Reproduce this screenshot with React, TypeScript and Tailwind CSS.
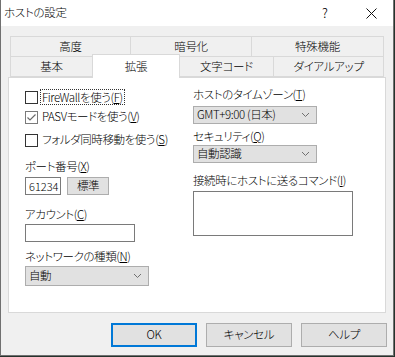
import React from 'react';

const font = "font-['Meiryo_UI','Noto_Sans_CJK_JP',sans-serif] [font-feature-settings:'palt'] font-light";

const Tab: React.FC<{ w: string; children: React.ReactNode; first?: boolean }> = ({ w, children, first }) => (
  <div className={`${w} ${first ? '' : '-ml-px'} h-full border border-[#d9d9d9] bg-[#f0f0f0] flex items-center justify-center text-[11.5px] tracking-[-0.3px] text-black whitespace-nowrap`}>
    {children}
  </div>
);

const Check: React.FC<{ checked?: boolean }> = ({ checked }) => (
  <div className={`w-[13px] h-[13px] border bg-white flex items-center justify-center shrink-0 ${checked ? 'border-[#7a7a7a]' : 'border-[#333333]'}`}>
    {checked && (
      <svg width="11" height="11" viewBox="0 0 11 11">
        <path d="M1.5 5.5 L4 8 L9.5 2.5" stroke="#6a6a6a" strokeWidth="1.2" fill="none" />
      </svg>
    )}
  </div>
);

const Chevron = () => (
  <svg width="9" height="6" viewBox="0 0 9 6" className="shrink-0">
    <path d="M1 1 L4.5 4.5 L8 1" stroke="#707070" strokeWidth="1" fill="none" />
  </svg>
);

const Select: React.FC<{ w: string; h: string; children: React.ReactNode }> = ({ w, h, children }) => (
  <div className={`${w} ${h} border border-[#adadad] bg-[#e1e1e1] flex items-center justify-between pl-[3px] pr-[6px] whitespace-nowrap`}>
    <span>{children}</span>
    <Chevron />
  </div>
);

const Btn: React.FC<{ children: React.ReactNode; primary?: boolean }> = ({ children, primary }) => (
  <div className={`w-[86px] h-[24px] bg-[#e1e1e1] flex items-center justify-center text-[11.5px] tracking-[-0.3px] ${primary ? 'border-2 border-[#0078d7]' : 'border border-[#adadad]'}`}>
    {children}
  </div>
);

const U: React.FC<{ children: React.ReactNode }> = ({ children }) => (
  <span className="underline underline-offset-1">{children}</span>
);

export default function App() {
  return (
    <div className={`w-[395px] h-[357px] bg-[#26332c] ${font} text-black`}>
      <div className="w-[394px] h-[356px] bg-[#f0f0f0] border-l border-r border-b border-[#707070] flex flex-col">
        {/* title bar */}
        <div className="h-[26px] bg-white flex items-center pl-[3px] shrink-0">
          <span className="text-[11.5px] tracking-[-0.3px] leading-none">ホストの設定</span>
          <span className="ml-auto text-[13px] w-[14px] text-center mr-[34px]">?</span>
          <svg width="11" height="11" viewBox="0 0 11 11" className="mr-[16px]">
            <path d="M0.5 0.5 L10.5 10.5 M10.5 0.5 L0.5 10.5" stroke="#111" strokeWidth="1" />
          </svg>
        </div>

        {/* tabs */}
        <div className="mt-[10px] ml-[9px] flex h-[21px]">
          <Tab w="w-[121px]" first>高度</Tab>
          <Tab w="w-[122px]">暗号化</Tab>
          <Tab w="w-[133px]">特殊機能</Tab>
        </div>
        <div className="-mt-px ml-[9px] flex h-[21px]">
          <Tab w="w-[83px]" first>基本</Tab>
          <div className="relative z-10 -ml-px -mt-[2px] h-[24px] w-[88px] bg-white border border-b-0 border-[#d9d9d9] flex items-center justify-center text-[11.5px] tracking-[-0.3px]">
            拡張
          </div>
          <Tab w="w-[95px]">文字コード</Tab>
          <Tab w="w-[111px]">ダイアルアップ</Tab>
        </div>

        {/* panel */}
        <div className="ml-[7px] w-[378px] h-[236px] bg-white border border-[#d9d9d9] flex text-[11.5px] tracking-[-0.4px] whitespace-nowrap">
          {/* left column */}
          <div className="w-[168px] shrink-0 pl-[16px] pt-[11px] flex flex-col">
            <div className="h-[16px] flex items-center">
              <Check />
              <span className="ml-[2px] px-[1px] border border-dotted border-[#333] leading-[14px]">
                FireWallを使う(<U>F</U>)
              </span>
            </div>
            <div className="mt-[4px] h-[16px] flex items-center">
              <Check checked />
              <span className="ml-[4px]">PASVモードを使う(<U>V</U>)</span>
            </div>
            <div className="mt-[7px] h-[16px] flex items-center">
              <Check />
              <span className="ml-[4px]">フォルダ同時移動を使う(<U>S</U>)</span>
            </div>
            <div className="mt-[11px] h-[16px] flex items-center">ポート番号(<U>X</U>)</div>
            <div className="mt-[2px] flex items-center">
              <div className="w-[36px] h-[18px] border border-[#7a7a7a] flex items-center pl-[3px] text-[11px] tracking-[0px]">61234</div>
              <div className="ml-[6px] w-[42px] h-[18px] border border-[#adadad] bg-[#e1e1e1] flex items-center justify-center">標準</div>
            </div>
            <div className="mt-[12px] h-[16px] flex items-center">アカウント(<U>C</U>)</div>
            <div className="mt-[1px] w-[110px] h-[18px] border border-[#7a7a7a]" />
            <div className="mt-[7px] h-[16px] flex items-center">ネットワークの種類(<U>N</U>)</div>
            <div className="mt-[1px]">
              <Select w="w-[124px]" h="h-[20px]">自動</Select>
            </div>
          </div>

          {/* right column */}
          <div className="pl-[16px] pt-[9px] flex flex-col">
            <div className="h-[16px] flex items-center">ホストのタイムゾーン(<U>T</U>)</div>
            <div className="mt-[3px]">
              <Select w="w-[124px]" h="h-[18px]">GMT+9:00 (日本)</Select>
            </div>
            <div className="mt-[5px] h-[16px] flex items-center">セキュリティ(<U>Q</U>)</div>
            <div className="mt-[0px]">
              <Select w="w-[124px]" h="h-[18px]">自動認識</Select>
            </div>
            <div className="mt-[10px] h-[16px] flex items-center">接続時にホストに送るコマンド(<U>I</U>)</div>
            <div className="mt-[2px] w-[160px] h-[45px] border border-[#7a7a7a]" />
          </div>
        </div>

        {/* buttons */}
        <div className="mt-[10px] flex justify-end gap-[9px] pr-[6px]">
          <Btn primary>OK</Btn>
          <Btn>キャンセル</Btn>
          <Btn>ヘルプ</Btn>
        </div>
      </div>
    </div>
  );
}
